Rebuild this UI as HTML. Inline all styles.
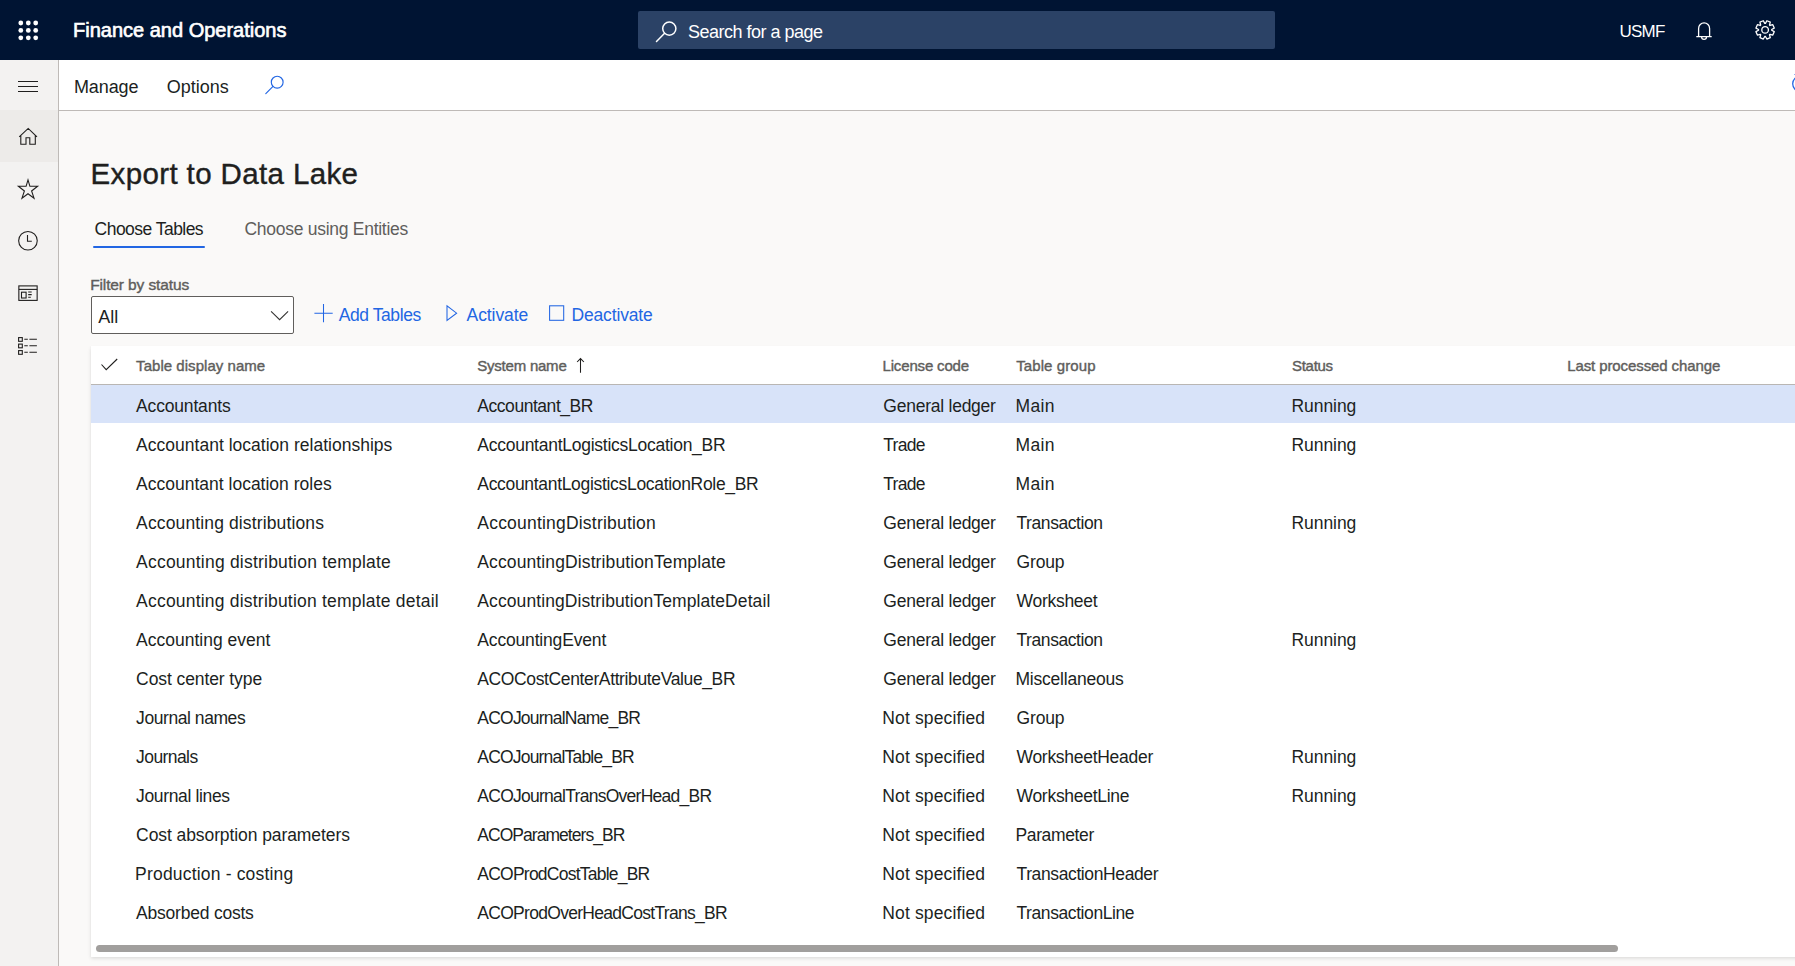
<!DOCTYPE html>
<html><head><meta charset="utf-8">
<style>
html,body{margin:0;padding:0;}
body{width:1795px;height:966px;overflow:hidden;position:relative;background:#faf9f8;font-family:"Liberation Sans",sans-serif;color:#201f1e;}
.t{position:absolute;white-space:nowrap;line-height:24px;}
.abs{position:absolute;}
#top{position:absolute;left:0;top:0;width:1795px;height:60px;background:#001433;}
#nav{position:absolute;left:0;top:60px;width:58px;height:906px;background:#f3f2f1;border-right:1px solid #bebab7;}
#cmd{position:absolute;left:59px;top:60px;width:1736px;height:50px;background:#fff;border-bottom:1px solid #bebab7;}
#grid{position:absolute;left:91px;top:346px;width:1720px;height:611px;background:#fff;box-shadow:0 1.6px 3.6px rgba(0,0,0,.13),0 0.3px 0.9px rgba(0,0,0,.11);}
.sel{position:absolute;left:91px;width:1704px;height:38px;background:#d8e3f9;}
.hdrline{position:absolute;left:91px;top:384px;width:1704px;height:1px;background:#b9b6b3;}
.row{color:#201f1e;}
.hdr{color:#605e5c;}
.white{color:#fff;}
.blue{color:#2266e3;}
.gray{color:#605e5c;}
svg{position:absolute;overflow:visible;}
</style></head><body>
<div id="top"></div>
<svg style="left:0;top:0" width="60" height="60">
  <g fill="#fff">
  <circle cx="20.8" cy="23" r="2.4"/><circle cx="28.3" cy="23" r="2.4"/><circle cx="35.7" cy="23" r="2.4"/>
  <circle cx="20.8" cy="30.4" r="2.4"/><circle cx="28.3" cy="30.4" r="2.4"/><circle cx="35.7" cy="30.4" r="2.4"/>
  <circle cx="20.8" cy="37.8" r="2.4"/><circle cx="28.3" cy="37.8" r="2.4"/><circle cx="35.7" cy="37.8" r="2.4"/>
  </g>
</svg>
<div class="abs" style="left:638px;top:11px;width:637px;height:38px;background:#2b4266;border-radius:2px"></div>
<svg style="left:0;top:0" width="1" height="1">
  <circle cx="669.3" cy="28.6" r="6.6" fill="none" stroke="#fff" stroke-width="1.5"/>
  <line x1="664.6" y1="33.3" x2="656.5" y2="41.5" stroke="#fff" stroke-width="1.5" stroke-linecap="round"/>
</svg>
<svg style="left:0;top:0" width="1" height="1">
  <path d="M1696.3 36.6 L1711.7 36.6 M1698.6 36.6 L1698.6 28.4 A5.5 5.6 0 0 1 1709.6 28.4 L1709.6 36.6" fill="none" stroke="#fff" stroke-width="1.3"/>
  <path d="M1701.6 37 A2.45 2.4 0 0 0 1706.5 37" fill="none" stroke="#fff" stroke-width="1.3"/>
</svg>
<svg style="left:0;top:0" width="1" height="1">
  <g transform="translate(1765.1,29.9)" fill="none" stroke="#fff" stroke-width="1.3">
   <circle r="3.3"/>
   <path d="M0.35 -6.59 L1.78 -9.13 L5.19 -7.71 L4.41 -4.91 L4.91 -4.41 L7.71 -5.19 L9.13 -1.78 L6.59 -0.35 L6.59 0.35 L9.13 1.78 L7.71 5.19 L4.91 4.41 L4.41 4.91 L5.19 7.71 L1.78 9.13 L0.35 6.59 L-0.35 6.59 L-1.78 9.13 L-5.19 7.71 L-4.41 4.91 L-4.91 4.41 L-7.71 5.19 L-9.13 1.78 L-6.59 0.35 L-6.59 -0.35 L-9.13 -1.78 L-7.71 -5.19 L-4.91 -4.41 L-4.41 -4.91 L-5.19 -7.71 L-1.78 -9.13 L-0.35 -6.59 Z" stroke-linejoin="round"/>
  </g>
</svg>

<div id="nav"></div>
<div class="abs" style="left:0;top:110px;width:58px;height:52px;background:#edebe9"></div>
<svg style="left:0;top:0" width="1" height="1">
  <g stroke="#201f1e" stroke-width="1" fill="none">
   <line x1="18" y1="81.5" x2="38" y2="81.5"/>
   <line x1="18" y1="86.5" x2="38" y2="86.5"/>
   <line x1="18" y1="91.5" x2="38" y2="91.5"/>
  </g>
  <g stroke="#201f1e" stroke-width="1.1" fill="none" stroke-linejoin="miter">
   <!-- home -->
   <path d="M19.2 136.9 L28.2 128.4 L37 136.9 M20.8 135.4 L20.8 144.3 L26 144.3 L26 137.7 L29.8 137.7 L29.8 144.3 L35.3 144.3 L35.3 135.4"/>
   <!-- star -->
   <path d="M28 179.9 L29.9 186.3 L37.6 186.3 L31.6 191 L34 198.2 L28 193.7 L22 198.2 L24.4 191 L18.4 186.3 L26.1 186.3 Z" stroke-linejoin="miter"/>
   <!-- clock -->
   <circle cx="27.95" cy="240.75" r="9.3"/>
   <path d="M27.5 235 L27.5 241.3 L31.8 241.3"/>
   <!-- workspace -->
   <rect x="18.85" y="285.9" width="18.3" height="14.5"/>
   <line x1="18.85" y1="289.4" x2="37.15" y2="289.4"/>
   <rect x="21.5" y="292.2" width="4.6" height="5.8"/>
   <path d="M28.2 292 L31.7 292 M28.2 294.6 L31.7 294.6 M28.2 297.2 L30.8 297.2"/>
   <!-- list -->
   <rect x="18.6" y="337.6" width="3.7" height="3.7"/>
   <rect x="18.6" y="344.1" width="3.7" height="3.7"/>
   <rect x="18.6" y="350.6" width="3.7" height="3.7"/>
   <path d="M24.3 339.3 L27.8 339.3 M29.4 339.3 L36.9 339.3 M24.3 345.8 L27.8 345.8 M29.4 345.8 L36.9 345.8 M24.3 352.2 L27.8 352.2 M29.4 352.2 L36.9 352.2"/>
  </g>
</svg>

<div id="cmd"></div>
<svg style="left:0;top:0" width="1" height="1">
  <circle cx="277.2" cy="82.2" r="5.9" fill="none" stroke="#2266e3" stroke-width="1.15"/>
  <line x1="273" y1="86.4" x2="265.8" y2="93.6" stroke="#2266e3" stroke-width="1.15" stroke-linecap="round"/>
  <circle cx="1800.3" cy="83.8" r="7.6" fill="none" stroke="#2266e3" stroke-width="1.3"/><line x1="1794.5" y1="74.5" x2="1800" y2="74.5" stroke="#2266e3" stroke-width="1.2"/>
</svg>

<div class="abs" style="left:93px;top:246px;width:112px;height:2px;background:#2266e3;border-radius:1px"></div>
<div class="abs" style="left:91px;top:296px;width:200.5px;height:35.5px;border:1px solid #605e5c;border-radius:2px;background:#fff"></div>
<svg style="left:0;top:0" width="1" height="1">
  <path d="M271.1 311.3 L279.6 319.7 L288.1 311.3" fill="none" stroke="#323130" stroke-width="1.05"/>
  <g stroke="#2266e3" stroke-width="1.05" fill="none">
   <path d="M323.5 304 L323.5 322.3 M314.4 313.2 L332.7 313.2"/>
   <path d="M447 305.9 L447 320.4 L456.6 313.15 Z" stroke-linejoin="miter"/>
   <rect x="549.6" y="305.8" width="14.1" height="14.5"/>
  </g>
</svg>

<div id="grid"></div>
<div class="hdrline"></div>
<svg style="left:0;top:0" width="1" height="1">
  <path d="M101.5 364.5 L106.2 369.6 L117.2 359" fill="none" stroke="#201f1e" stroke-width="1.1"/>
  <path d="M580.5 358.6 L580.5 372.7 M577.1 362 L580.5 358.6 L583.9 362" fill="none" stroke="#201f1e" stroke-width="1.05"/>
</svg>
<div class="sel" style="top:385px"></div>
<div class="t row" style="left:136.10px;top:393.94px;font-size:17.5px;letter-spacing:-0.176px;">Accountants</div>
<div class="t row" style="left:477.30px;top:393.94px;font-size:17.5px;letter-spacing:-0.455px;">Accountant_BR</div>
<div class="t row" style="left:883.30px;top:393.94px;font-size:17.5px;letter-spacing:-0.241px;">General ledger</div>
<div class="t row" style="left:1015.50px;top:393.94px;font-size:17.5px;letter-spacing:0.367px;">Main</div>
<div class="t row" style="left:1291.50px;top:393.94px;font-size:17.5px;letter-spacing:-0.059px;">Running</div>
<div class="t row" style="left:136.10px;top:432.94px;font-size:17.5px;letter-spacing:0.012px;">Accountant location relationships</div>
<div class="t row" style="left:477.30px;top:432.94px;font-size:17.5px;letter-spacing:-0.259px;">AccountantLogisticsLocation_BR</div>
<div class="t row" style="left:883.30px;top:432.94px;font-size:17.5px;letter-spacing:-0.733px;">Trade</div>
<div class="t row" style="left:1015.50px;top:432.94px;font-size:17.5px;letter-spacing:0.367px;">Main</div>
<div class="t row" style="left:1291.50px;top:432.94px;font-size:17.5px;letter-spacing:-0.059px;">Running</div>
<div class="t row" style="left:136.10px;top:471.94px;font-size:17.5px;">Accountant location roles</div>
<div class="t row" style="left:477.30px;top:471.94px;font-size:17.5px;letter-spacing:-0.315px;">AccountantLogisticsLocationRole_BR</div>
<div class="t row" style="left:883.30px;top:471.94px;font-size:17.5px;letter-spacing:-0.733px;">Trade</div>
<div class="t row" style="left:1015.50px;top:471.94px;font-size:17.5px;letter-spacing:0.367px;">Main</div>
<div class="t row" style="left:136.10px;top:510.94px;font-size:17.5px;letter-spacing:0.131px;">Accounting distributions</div>
<div class="t row" style="left:477.30px;top:510.94px;font-size:17.5px;letter-spacing:0.205px;">AccountingDistribution</div>
<div class="t row" style="left:883.30px;top:510.94px;font-size:17.5px;letter-spacing:-0.241px;">General ledger</div>
<div class="t row" style="left:1016.50px;top:510.94px;font-size:17.5px;letter-spacing:-0.425px;">Transaction</div>
<div class="t row" style="left:1291.50px;top:510.94px;font-size:17.5px;letter-spacing:-0.059px;">Running</div>
<div class="t row" style="left:136.10px;top:549.94px;font-size:17.5px;letter-spacing:0.215px;">Accounting distribution template</div>
<div class="t row" style="left:477.30px;top:549.94px;font-size:17.5px;letter-spacing:0.114px;">AccountingDistributionTemplate</div>
<div class="t row" style="left:883.30px;top:549.94px;font-size:17.5px;letter-spacing:-0.241px;">General ledger</div>
<div class="t row" style="left:1016.50px;top:549.94px;font-size:17.5px;letter-spacing:-0.151px;">Group</div>
<div class="t row" style="left:136.10px;top:588.94px;font-size:17.5px;letter-spacing:0.206px;">Accounting distribution template detail</div>
<div class="t row" style="left:477.30px;top:588.94px;font-size:17.5px;letter-spacing:0.089px;">AccountingDistributionTemplateDetail</div>
<div class="t row" style="left:883.30px;top:588.94px;font-size:17.5px;letter-spacing:-0.241px;">General ledger</div>
<div class="t row" style="left:1016.50px;top:588.94px;font-size:17.5px;letter-spacing:-0.270px;">Worksheet</div>
<div class="t row" style="left:136.10px;top:627.94px;font-size:17.5px;">Accounting event</div>
<div class="t row" style="left:477.30px;top:627.94px;font-size:17.5px;letter-spacing:-0.170px;">AccountingEvent</div>
<div class="t row" style="left:883.30px;top:627.94px;font-size:17.5px;letter-spacing:-0.241px;">General ledger</div>
<div class="t row" style="left:1016.50px;top:627.94px;font-size:17.5px;letter-spacing:-0.425px;">Transaction</div>
<div class="t row" style="left:1291.50px;top:627.94px;font-size:17.5px;letter-spacing:-0.059px;">Running</div>
<div class="t row" style="left:136.10px;top:666.94px;font-size:17.5px;letter-spacing:-0.093px;">Cost center type</div>
<div class="t row" style="left:477.30px;top:666.94px;font-size:17.5px;letter-spacing:-0.375px;">ACOCostCenterAttributeValue_BR</div>
<div class="t row" style="left:883.30px;top:666.94px;font-size:17.5px;letter-spacing:-0.241px;">General ledger</div>
<div class="t row" style="left:1015.50px;top:666.94px;font-size:17.5px;letter-spacing:-0.220px;">Miscellaneous</div>
<div class="t row" style="left:136.10px;top:705.94px;font-size:17.5px;letter-spacing:-0.436px;">Journal names</div>
<div class="t row" style="left:477.30px;top:705.94px;font-size:17.5px;letter-spacing:-0.775px;">ACOJournalName_BR</div>
<div class="t row" style="left:882.30px;top:705.94px;font-size:17.5px;letter-spacing:0.131px;">Not specified</div>
<div class="t row" style="left:1016.50px;top:705.94px;font-size:17.5px;letter-spacing:-0.151px;">Group</div>
<div class="t row" style="left:136.10px;top:744.94px;font-size:17.5px;letter-spacing:-0.585px;">Journals</div>
<div class="t row" style="left:477.30px;top:744.94px;font-size:17.5px;letter-spacing:-0.809px;">ACOJournalTable_BR</div>
<div class="t row" style="left:882.30px;top:744.94px;font-size:17.5px;letter-spacing:0.131px;">Not specified</div>
<div class="t row" style="left:1016.50px;top:744.94px;font-size:17.5px;letter-spacing:-0.285px;">WorksheetHeader</div>
<div class="t row" style="left:1291.50px;top:744.94px;font-size:17.5px;letter-spacing:-0.059px;">Running</div>
<div class="t row" style="left:136.10px;top:783.94px;font-size:17.5px;letter-spacing:-0.358px;">Journal lines</div>
<div class="t row" style="left:477.30px;top:783.94px;font-size:17.5px;letter-spacing:-0.735px;">ACOJournalTransOverHead_BR</div>
<div class="t row" style="left:882.30px;top:783.94px;font-size:17.5px;letter-spacing:0.131px;">Not specified</div>
<div class="t row" style="left:1016.50px;top:783.94px;font-size:17.5px;letter-spacing:-0.281px;">WorksheetLine</div>
<div class="t row" style="left:1291.50px;top:783.94px;font-size:17.5px;letter-spacing:-0.059px;">Running</div>
<div class="t row" style="left:136.10px;top:822.94px;font-size:17.5px;letter-spacing:-0.084px;">Cost absorption parameters</div>
<div class="t row" style="left:477.30px;top:822.94px;font-size:17.5px;letter-spacing:-0.958px;">ACOParameters_BR</div>
<div class="t row" style="left:882.30px;top:822.94px;font-size:17.5px;letter-spacing:0.131px;">Not specified</div>
<div class="t row" style="left:1015.50px;top:822.94px;font-size:17.5px;letter-spacing:-0.371px;">Parameter</div>
<div class="t row" style="left:135.10px;top:861.94px;font-size:17.5px;letter-spacing:0.183px;">Production - costing</div>
<div class="t row" style="left:477.30px;top:861.94px;font-size:17.5px;letter-spacing:-0.767px;">ACOProdCostTable_BR</div>
<div class="t row" style="left:882.30px;top:861.94px;font-size:17.5px;letter-spacing:0.131px;">Not specified</div>
<div class="t row" style="left:1016.50px;top:861.94px;font-size:17.5px;letter-spacing:-0.384px;">TransactionHeader</div>
<div class="t row" style="left:136.10px;top:900.94px;font-size:17.5px;letter-spacing:-0.221px;">Absorbed costs</div>
<div class="t row" style="left:477.30px;top:900.94px;font-size:17.5px;letter-spacing:-0.708px;">ACOProdOverHeadCostTrans_BR</div>
<div class="t row" style="left:882.30px;top:900.94px;font-size:17.5px;letter-spacing:0.131px;">Not specified</div>
<div class="t row" style="left:1016.50px;top:900.94px;font-size:17.5px;letter-spacing:-0.417px;">TransactionLine</div>
<div class="t hdr" style="left:136.10px;top:353.80px;font-size:15px;letter-spacing:0.037px;-webkit-text-stroke:0.4px currentColor;">Table display name</div>
<div class="t hdr" style="left:477.30px;top:353.80px;font-size:15px;letter-spacing:-0.226px;-webkit-text-stroke:0.4px currentColor;">System name</div>
<div class="t hdr" style="left:882.50px;top:353.80px;font-size:15px;letter-spacing:-0.159px;-webkit-text-stroke:0.4px currentColor;">License code</div>
<div class="t hdr" style="left:1016.20px;top:353.80px;font-size:15px;letter-spacing:0.095px;-webkit-text-stroke:0.4px currentColor;">Table group</div>
<div class="t hdr" style="left:1292.00px;top:353.80px;font-size:15px;letter-spacing:-0.285px;-webkit-text-stroke:0.4px currentColor;">Status</div>
<div class="t hdr" style="left:1567.20px;top:353.80px;font-size:15px;letter-spacing:-0.098px;-webkit-text-stroke:0.4px currentColor;">Last processed change</div>
<div class="t white" style="left:73.00px;top:17.77px;font-size:20px;-webkit-text-stroke:0.4px currentColor;-webkit-text-stroke:0.65px #fff;">Finance and Operations</div>
<div class="t white" style="left:688.00px;top:20.06px;font-size:18px;letter-spacing:-0.505px;">Search for a page</div>
<div class="t white" style="left:1619.40px;top:20.41px;font-size:17px;letter-spacing:-0.759px;">USMF</div>
<div class="t " style="left:74.00px;top:75.06px;font-size:18px;letter-spacing:-0.127px;">Manage</div>
<div class="t " style="left:166.70px;top:75.06px;font-size:18px;">Options</div>
<div class="t " style="left:90.50px;top:161.78px;font-size:29.5px;letter-spacing:0.376px;-webkit-text-stroke:0.4px currentColor;">Export to Data Lake</div>
<div class="t " style="left:94.60px;top:217.14px;font-size:17.5px;letter-spacing:-0.535px;">Choose Tables</div>
<div class="t gray" style="left:244.50px;top:217.14px;font-size:17.5px;letter-spacing:-0.276px;">Choose using Entities</div>
<div class="t gray" style="left:90.20px;top:272.73px;font-size:15.5px;letter-spacing:-0.122px;-webkit-text-stroke:0.4px currentColor;">Filter by status</div>
<div class="t " style="left:98.30px;top:304.96px;font-size:18px;">All</div>
<div class="t blue" style="left:338.70px;top:303.04px;font-size:17.5px;letter-spacing:-0.415px;">Add Tables</div>
<div class="t blue" style="left:466.60px;top:303.04px;font-size:17.5px;letter-spacing:-0.088px;">Activate</div>
<div class="t blue" style="left:571.50px;top:303.04px;font-size:17.5px;letter-spacing:-0.161px;">Deactivate</div>
<div class="abs" style="left:96px;top:945px;width:1522px;height:7px;background:#a19f9d;border-radius:3.5px"></div>
</body></html>
